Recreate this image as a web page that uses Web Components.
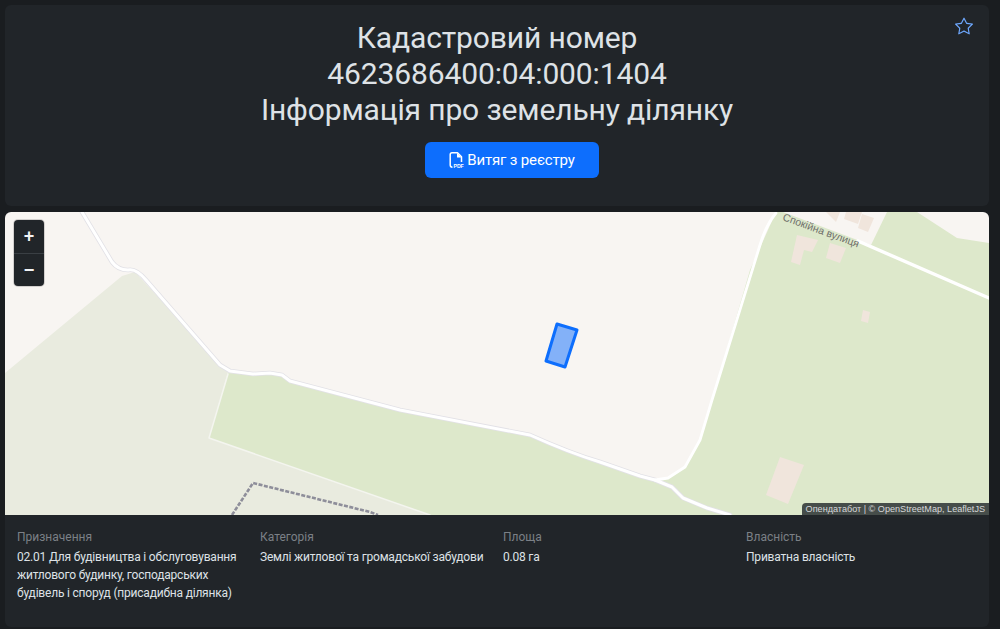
<!DOCTYPE html>
<html lang="uk">
<head>
<meta charset="utf-8">
<title>Кадастровий номер</title>
<style>
  html, body { margin: 0; height: 100%; }
  body {
    background: #1a1d20;
    color: #dee2e6;
    font-family: Roboto, "Noto Sans", sans-serif;
    overflow: hidden;
  }
  main {
    display: flex;
    flex-direction: column;
    gap: 6px;
    padding: 5px 11px 2px 5px;
  }
</style>
</head>
<body>
<main>
  <parcel-header>
    <span slot="title">Кадастровий номер<br>4623686400:04:000:1404<br>Інформація про земельну ділянку</span>
    Витяг з реєстру
  </parcel-header>
  <parcel-card>
    <parcel-map></parcel-map>
    <info-grid>
      <info-item label="Призначення">02.01 Для будівництва і обслуговування житлового будинку, господарських будівель і споруд (присадибна ділянка)</info-item>
      <info-item label="Категорія">Землі житлової та громадської забудови</info-item>
      <info-item label="Площа">0.08 га</info-item>
      <info-item label="Власність">Приватна власність</info-item>
    </info-grid>
  </parcel-card>
</main>

<script>
class ParcelHeader extends HTMLElement {
  constructor() {
    super();
    this.attachShadow({ mode: 'open' }).innerHTML = `
      <style>
        :host {
          display: block;
          position: relative;
          background: #212529;
          border-radius: 6px;
          height: 201px;
          padding-top: 15px;
          box-sizing: border-box;
          text-align: center;
        }
        h1 {
          margin: 0;
          font-size: 30px;
          font-weight: 400;
          letter-spacing: -.13px;
          line-height: 36px;
          color: #dee2e6;
        }
        a {
          display: inline-flex;
          align-items: center;
          justify-content: center;
          gap: 2px;
          width: 174px;
          height: 36px;
          margin: 14px 0 0 30px;
          background: #0d6efd;
          border-radius: 6px;
          color: #fff;
          font-size: 15px;
          letter-spacing: -.15px;
          text-decoration: none;
        }
        a svg { width: 16px; height: 16px; }
        .star {
          position: absolute;
          top: 12px;
          right: 16px;
          width: 18px;
          height: 18px;
          fill: #6ea8fe;
        }
      </style>
      <h1><slot name="title"></slot></h1>
      <a href="#">
        <svg viewBox="0 0 16 16">
          <path fill="none" stroke="#fff" stroke-width="1.5" stroke-linejoin="round" d="M3.5 15.2 Q1.2 15.2 1.2 13 V2.5 Q1.2 .8 3 .8 H8.5 L12.5 4.8 V10"/>
          <path fill="#fff" d="M8 1 V5.5 H12.5 Z"/>
          <text x="4.6" y="15.6" fill="#fff" font-family="Liberation Sans, sans-serif" font-size="5.2" font-weight="700">PDF</text>
        </svg>
        <slot></slot>
      </a>
      <svg class="star" viewBox="0 0 16 16">
        <path d="M2.866 14.85c-.078.444.36.791.746.593l4.39-2.256 4.389 2.256c.386.198.824-.149.746-.592l-.83-4.73 3.522-3.356c.33-.314.16-.888-.282-.95l-4.898-.696L8.465.792a.513.513 0 0 0-.927 0L5.354 5.12l-4.898.696c-.441.062-.612.636-.283.95l3.523 3.356-.83 4.73zm4.905-2.767-3.686 1.894.694-3.957a.565.565 0 0 0-.163-.505L1.71 6.745l4.052-.576a.525.525 0 0 0 .393-.288L8 2.223l1.847 3.658a.525.525 0 0 0 .393.288l4.052.575-2.906 2.77a.565.565 0 0 0-.163.506l.694 3.957-3.686-1.894a.503.503 0 0 0-.461 0z"/>
      </svg>
    `;
  }
}

class ParcelCard extends HTMLElement {
  constructor() {
    super();
    this.attachShadow({ mode: 'open' }).innerHTML = `
      <style>
        :host {
          display: block;
          background: #212529;
          border-radius: 6px;
          overflow: hidden;
        }
      </style>
      <slot></slot>
    `;
  }
}

const MAIN_ROAD = 'M82 212 L112 262 Q118 270 128 270 Q136 268 146 280 L220 365 L230 371 L253 374 L270 373 L282 375 L290 381 L400 410 L530 435 Q570 453 600 462 L640 476 L655 480 L672 487 L683 498 L707 508 L730 515';

class ParcelMap extends HTMLElement {
  constructor() {
    super();
    this.attachShadow({ mode: 'open' }).innerHTML = `
      <style>
        :host {
          display: block;
          position: relative;
          height: 303px;
          overflow: hidden;
          background: #f8f5f2;
        }
        svg.map { display: block; width: 100%; height: 100%; }
        .zoom {
          position: absolute;
          top: 8px;
          left: 9px;
          width: 30px;
          height: 66px;
          background: #212529;
          border-radius: 4px;
          display: grid;
          grid-template-rows: 1fr 1fr;
          box-shadow: 0 0 0 1px rgba(0,0,0,.15);
        }
        .zoom span {
          display: flex;
          align-items: center;
          justify-content: center;
          color: #f1f3f5;
          font: 700 18px "Liberation Sans", sans-serif;
        }
        .zoom span + span { border-top: 1px solid #3a3f44; }
        .attr {
          position: absolute;
          right: 0;
          bottom: 0;
          padding: 0 4px;
          height: 12px;
          background: rgba(33,37,41,.8);
          border-top-left-radius: 4px;
          color: #d6d8da;
          font: 9.1px/12px "Liberation Sans", sans-serif;
          white-space: nowrap;
        }
      </style>
      <svg class="map" viewBox="5 212 984 303">
        <polygon fill="#e9ebdf" points="5,373 122,276 135,272 228,372 209,438 430,515 5,515"/>
        <polygon fill="#dde8cb" points="228,373 253,374 270,373 282,375 290,381 400,410 530,435 600,462 655,480 672,487 683,498 707,508 730,515 430,515 209,438"/>
        <polygon fill="#dde8cb" points="776,212 917,212 957,238 989,243 989,515 730,515 683,498 672,487 655,480 668,478 685,467 700,440 712,400 750,270"/>
        <polygon fill="#f8f5f2" points="783,212 887,212 871,245 860,241"/>
        <g fill="#f0e5dc">
          <polygon points="797,235 818,240 812,252 804,250 800,265 791,262"/>
          <polygon points="830,243 846,248 840,263 826,258"/>
          <polygon points="863,310 870,312 868,323 861,321"/>
          <polygon points="780,457 804,465 788,504 766,495"/>
          <polygon points="826,212 840,212 836,222"/>
          <polygon points="846,212 862,212 858,224 844,219"/>
          <polygon points="862,214 874,218 868,232 858,228"/>
        </g>
        <g fill="none" stroke-linejoin="round" stroke-linecap="round">
          <path stroke="#e2e1e6" stroke-width="4.6" d="${MAIN_ROAD}"/>
          <path stroke="#fff" stroke-width="3" d="${MAIN_ROAD}"/>
          <path stroke="#fff" stroke-width="2.8" d="M776 213 Q766 225 760 245 L712 400 L700 440 L685 467 L668 478 L655 480"/>
          <path stroke="#fff" stroke-width="3.4" d="M858 241 L989 298"/>
          <path stroke="#8e8e9a" stroke-width="2.6" stroke-dasharray="4 1.5" stroke-linecap="butt" d="M232 515 L253 483 L370 512 L378 515"/>
          <path stroke="#f4f5ef" stroke-width="1.5" d="M228 374 L209 438 L430 515"/>
        </g>
        <polygon fill="#0d6efd" fill-opacity=".5" stroke="#0d6efd" stroke-width="3" stroke-linejoin="round" points="557,324 577,330 565,367 546,361"/>
        <text x="0" y="0" transform="translate(782,220) rotate(20)" fill="#6f6f6a" font-family="Liberation Sans, sans-serif" font-size="10.5">Спокійна вулиця</text>
      </svg>
      <div class="zoom"><span>+</span><span>−</span></div>
      <div class="attr">Опендатабот | © OpenStreetMap, LeafletJS</div>
    `;
  }
}

class InfoGrid extends HTMLElement {
  constructor() {
    super();
    this.attachShadow({ mode: 'open' }).innerHTML = `
      <style>
        :host {
          display: grid;
          grid-template-columns: repeat(4, 243px);
          padding: 13px 0 16px 12px;
          height: 112px;
          box-sizing: border-box;
        }
      </style>
      <slot></slot>
    `;
  }
}

class InfoItem extends HTMLElement {
  constructor() {
    super();
    this.attachShadow({ mode: 'open' }).innerHTML = `
      <style>
        :host {
          display: block;
          font-size: 12px;
          letter-spacing: -.2px;
          line-height: 18px;
          color: #dee2e6;
        }
        .label { color: #7b8086; margin-bottom: 2px; letter-spacing: 0; }
        .value { max-width: 231px; }
      </style>
      <div class="label"></div>
      <div class="value"><slot></slot></div>
    `;
  }

  connectedCallback() {
    this.shadowRoot.querySelector('.label').textContent = this.getAttribute('label');
  }
}

customElements.define('parcel-header', ParcelHeader);
customElements.define('parcel-card', ParcelCard);
customElements.define('parcel-map', ParcelMap);
customElements.define('info-grid', InfoGrid);
customElements.define('info-item', InfoItem);
</script>
</body>
</html>
